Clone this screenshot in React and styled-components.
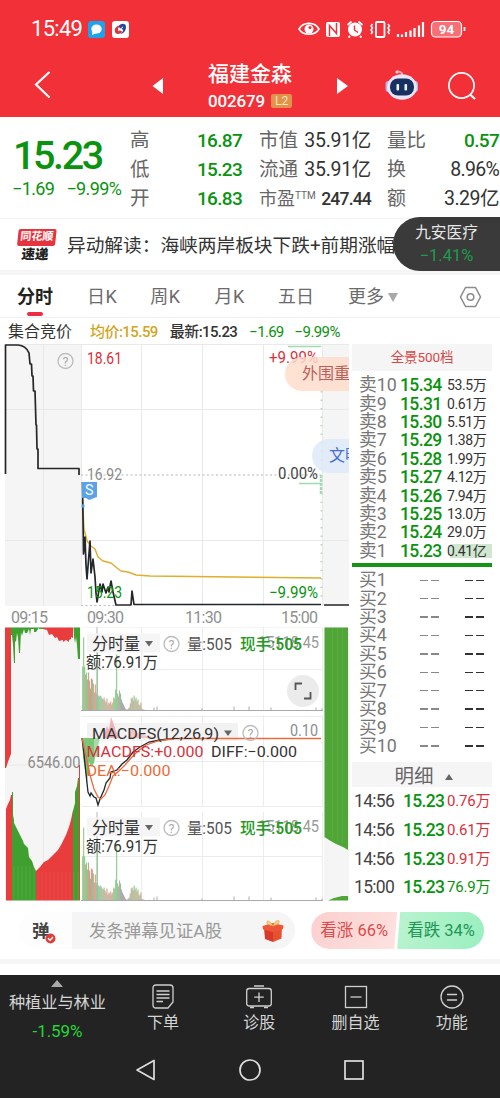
import React from "react";
import styled, { createGlobalStyle } from "styled-components";

const GlobalStyle = createGlobalStyle`
  * {
    box-sizing: border-box;
  }
  body {
    margin: 0;
    background: #fff;
    font-family: Roboto, "Noto Sans CJK SC", sans-serif;
    color: #333;
  }
  svg {
    display: block;
    flex-shrink: 0;
  }
`;

const RED = "#f23037";
const GREEN = "#0a930f";

const Screen = styled.div`
  width: 500px;
  height: 1098px;
  overflow: hidden;
  display: flex;
  flex-direction: column;
`;

const Text = styled.span`
  flex-shrink: 0;
  white-space: nowrap;
  font-size: ${(p) => p.$size || 16}px;
  line-height: ${(p) => p.$lh || 20}px;
  letter-spacing: ${(p) => p.$ls || 0}px;
  font-weight: ${(p) => p.$weight || 400};
  color: ${(p) => p.$color || "inherit"};
`;

/* ---------- header ---------- */

const Header = styled.header`
  height: 117px;
  flex-shrink: 0;
  background: ${RED};
  color: #fff;
`;

const StatusBar = styled.div`
  display: flex;
  align-items: center;
  height: 58px;
  padding: 0 31px 0 31px;
`;

const StatusIcons = styled.div`
  display: flex;
  align-items: center;
  margin-left: auto;
`;

const AppBadge = styled.div`
  width: 17px;
  height: 17px;
  margin-left: ${(p) => p.$gap}px;
  border-radius: 3px;
  background: ${(p) => p.$bg};
`;

const TitleBar = styled.div`
  display: flex;
  align-items: center;
  height: 55px;
  padding: 0 23px 0 34px;
`;

const Title = styled.div`
  display: flex;
  flex-direction: column;
  align-items: center;
  width: 174px;
`;

const CodeLine = styled.div`
  display: flex;
  align-items: center;
  gap: 6px;
  margin-top: 6px;
`;

const LevelTag = styled.span`
  width: 21px;
  height: 14px;
  border-radius: 2px;
  background: #e2924a;
  color: #ffe6bd;
  font-size: 12px;
  line-height: 15px;
  text-align: center;
`;

/* ---------- quote ---------- */

const Quote = styled.section`
  display: flex;
  height: 102px;
  flex-shrink: 0;
  padding-top: 9px;
  border-bottom: 1px solid #f3f3f3;
  color: ${GREEN};
`;

const LastPrice = styled.div`
  width: 130px;
  padding: 9px 0 0 13px;
`;

const Changes = styled.div`
  display: flex;
  gap: 12px;
  margin: 2px 0 0 -1px;
`;

const QuoteColumn = styled.div`
  width: ${(p) => p.$width}px;
  margin-right: ${(p) => p.$gap || 0}px;
`;

const QuoteRow = styled.div`
  display: flex;
  align-items: center;
  justify-content: space-between;
  height: 29px;
`;

const Sup = styled.sup`
  font-size: 10px;
  line-height: 0;
  vertical-align: 6px;
`;

/* ---------- news ---------- */

const News = styled.section`
  position: relative;
  display: flex;
  align-items: center;
  height: 51px;
  flex-shrink: 0;
  padding: 2px 0 0 17px;
`;

const NewsLogo = styled.div`
  width: 38px;
  margin-right: 12px;
  text-align: center;
  transform: skewX(-6deg);
`;

const NewsLogoTop = styled.div`
  height: 17px;
  border-radius: 2px;
  background: #e5343d;
  color: #fff;
  font-size: 11px;
  font-weight: 700;
  line-height: 16px;
`;

const NewsLogoBottom = styled.div`
  color: #222;
  font-size: 13.5px;
  font-weight: 900;
  line-height: 16px;
`;

const FloatStock = styled.div`
  position: absolute;
  right: 0;
  top: -2px;
  width: 107px;
  height: 54px;
  border-radius: 27px 0 0 27px;
  background: #3a3a3a;
  display: flex;
  flex-direction: column;
  align-items: center;
  padding-top: 5px;
  gap: 2px;
`;

const Divider = styled.div`
  height: ${(p) => p.$height}px;
  flex-shrink: 0;
  background: #f5f5f5;
`;

/* ---------- tabs ---------- */

const Tabs = styled.nav`
  display: flex;
  align-items: center;
  height: 43px;
  flex-shrink: 0;
  padding: 2px 16px 0 17px;
  border-bottom: 1px solid #f0f0f0;
`;

const Tab = styled.div`
  display: flex;
  flex-direction: column;
  align-items: center;
  justify-content: center;
  height: 43px;
  margin-right: ${(p) => p.$gap}px;
  color: ${(p) => (p.$active ? "#222" : "#6b6b6b")};
`;

const Underline = styled.i`
  width: 16px;
  height: 4px;
  border-radius: 2px;
  margin: 5px 0 -9px;
  background: #ee2b45;
`;

const InfoRow = styled.div`
  display: flex;
  align-items: center;
  height: 25px;
  flex-shrink: 0;
  padding: 2px 0 0 8px;
`;

/* ---------- charts ---------- */

const Main = styled.main`
  display: flex;
  height: 564px;
  flex-shrink: 0;
`;

const Charts = styled.div`
  width: 349px;
  margin-right: 3px;
  overflow: hidden;
`;

const PriceBox = styled.div`
  position: relative;
  height: 263px;
  overflow: hidden;
`;

const Bullet = styled.div`
  position: absolute;
  left: ${(p) => p.$x}px;
  top: ${(p) => p.$y}px;
  width: 120px;
  height: 34px;
  padding-left: ${(p) => p.$pad}px;
  border-radius: 17px;
  background: ${(p) => p.$bg};
  color: ${(p) => p.$fg};
  font-size: 16px;
  line-height: 34px;
  white-space: nowrap;
`;

const TimeAxis = styled.div`
  display: flex;
  height: 21px;
  color: #8f8f8f;
  padding-left: 11px;
`;

const TimeMark = styled(Text)`
  width: ${(p) => p.$width}px;
`;

const Lower = styled.div`
  display: flex;
  height: 280px;
`;

const Indicators = styled.div`
  width: 243px;
`;

const Indicator = styled.div`
  position: relative;
  height: ${(p) => p.$height}px;
`;

const Expand = styled.div`
  position: absolute;
  left: 206px;
  top: 48px;
  width: 32px;
  height: 32px;
  border-radius: 16px;
  background: #ebebeb;
`;

/* ---------- order book ---------- */

const Book = styled.aside`
  width: 140px;
  padding-top: 1px;
`;

const BookHeader = styled.div`
  height: 27px;
  background: #f5f5f5;
  color: #d84848;
  text-align: center;
  line-height: 26px;
`;

const Levels = styled.div`
  padding-top: ${(p) => p.$top}px;
`;

const Level = styled.div`
  display: flex;
  align-items: center;
  height: 18.42px;
  padding-left: 7px;
`;

const LevelName = styled(Text)`
  width: 41px;
  color: #777;
`;

const LevelPrice = styled(Text)`
  width: 46px;
  color: ${GREEN};
`;

const LevelVolume = styled(Text)`
  width: 46px;
  padding-left: 1px;
  background: ${(p) =>
    p.$mark ? "linear-gradient(90deg, #fff 4px, #cfe8cf 4px)" : "none"};
`;

const Dashes = styled.span`
  width: ${(p) => p.$width}px;
  height: 1.5px;
  margin-left: ${(p) => p.$left}px;
  background: linear-gradient(
    90deg,
    ${(p) => p.$color} 8px,
    transparent 8px,
    transparent 11px,
    ${(p) => p.$color} 11px
  );
`;

const Pressure = styled.div`
  height: 4px;
  margin-top: 3px;
  background: #159418;
`;

const DetailHeader = styled.div`
  display: flex;
  align-items: center;
  justify-content: center;
  gap: 11px;
  height: 25px;
  margin-top: 7px;
  padding: 4px 0 0 3px;
  background: #f5f5f5;
  color: #666;
`;

const Trade = styled.div`
  display: flex;
  align-items: center;
  height: 28.6px;
  padding-left: 2px;
`;

const TradeCell = styled(Text)`
  width: ${(p) => p.$width}px;
`;

/* ---------- comment bar ---------- */

const CommentBar = styled.div`
  display: flex;
  align-items: center;
  height: 52px;
  flex-shrink: 0;
  padding: 0 16px 5px 18px;
`;

const CommentInput = styled.div`
  display: flex;
  align-items: center;
  width: 278px;
  height: 37px;
  margin-right: 16px;
  border-radius: 19px;
  background: linear-gradient(90deg, #fdfdfd 54px, #f5f5f5 54px);
  color: #999;
`;

const Vote = styled.div`
  width: ${(p) => p.$width}px;
  height: 37px;
  padding-left: ${(p) => (p.$up ? 9 : 10)}px;
  border-radius: ${(p) => (p.$up ? "19px 0 0 19px" : "0 19px 19px 0")};
  clip-path: ${(p) =>
    p.$up
      ? "polygon(0 0, 100% 0, calc(100% - 3px) 100%, 0 100%)"
      : "polygon(3px 0, 100% 0, 100% 100%, 0 100%)"};
  background: ${(p) =>
    p.$up
      ? "linear-gradient(120deg, #fbcfcf, #fde2df)"
      : "linear-gradient(100deg, #b9f3cf, #9aefc0)"};
  color: ${(p) => (p.$up ? "#dc4a4a" : "#219653")};
  line-height: 38px;
`;

/* ---------- bottom ---------- */

const Bottom = styled.footer`
  flex: 1;
  margin-top: 11px;
  background: #232323;
  color: #d5d5d5;
`;

const Toolbar = styled.div`
  display: flex;
  height: 68px;
`;

const Industry = styled.div`
  display: flex;
  flex-direction: column;
  align-items: center;
  width: 115px;
  padding-top: 5px;
`;

const IndustryArrow = styled.svg`
  margin-bottom: 2px;
`;

const Tool = styled.div`
  display: flex;
  flex-direction: column;
  align-items: center;
  width: 96.4px;
  padding-top: 9px;
`;

const SystemNav = styled.div`
  display: flex;
  align-items: center;
  height: 54px;
  padding: 0 136px 0 135px;
  justify-content: space-between;
`;

/* ---------- data ---------- */

const quoteA = [
  ["高", "16.87"],
  ["低", "15.23"],
  ["开", "16.83"],
];

const sells = [
  ["卖10", "15.34", "53.5万"],
  ["卖9", "15.31", "0.61万"],
  ["卖8", "15.30", "5.51万"],
  ["卖7", "15.29", "1.38万"],
  ["卖6", "15.28", "1.99万"],
  ["卖5", "15.27", "4.12万"],
  ["卖4", "15.26", "7.94万"],
  ["卖3", "15.25", "13.0万"],
  ["卖2", "15.24", "29.0万"],
  ["卖1", "15.23", "0.41亿"],
];

const trades = [
  ["14:56", "0.76万", "#d9303a"],
  ["14:56", "0.61万", "#d9303a"],
  ["14:56", "0.91万", "#d9303a"],
  ["15:00", "76.9万", GREEN],
];

// minute volume bars: height and colour key
const volume =
  "44g 73g 44g 36r 38g 31g 38r 30r 22g 32r 31r 27g 18r 26r 17y 62g 15g 14g 15g 14y 12g 11r 13g 10r 8g 12r 6y 8r 7g 9r 6r 8g 13r 12g 21g 56g 17g 14y 20y 17g 11y 8y 6y 4y 2y 1y 1r 2y 3g 7r 12g 13r 10y 15g 11r 13g 9r 11g 6r 5g 8r 2y 1y 1y"
    .split(" ")
    .map((v) => [parseInt(v, 10), v.slice(-1)]);

const volumeColors = { g: "#84c884", r: "#dc9a8c", y: "#b1a8b4" };

/* ---------- small drawings ---------- */

// chart label stretched to a fixed run
const ChartText = ({ x, y, w, size = 16, fill = "#333", weight = 400, children }) => (
  <text
    x={x}
    y={y}
    fontSize={size}
    fontWeight={weight}
    fill={fill}
    textLength={w}
    lengthAdjust="spacingAndGlyphs"
  >
    {children}
  </text>
);

const Help = ({ x, y }) => (
  <g>
    <circle cx={x} cy={y} r="7.5" fill="none" stroke="#bcbcbc" strokeWidth="1.3" />
    <text x={x} y={y + 4.5} fontSize="12.5" fill="#aaa" textAnchor="middle">
      ?
    </text>
  </g>
);

const Grid = ({ height, rows }) => (
  <g stroke="#ececec" strokeWidth="1">
    {[60.5, 121.5, 182.5, 241.5].map((x) => (
      <line key={x} x1={x} x2={x} y1="0" y2={height} />
    ))}
    {rows.map((y) => (
      <line key={y} x1="1" x2="242" y1={y} y2={y} />
    ))}
  </g>
);

function StatusGlyphs() {
  return (
    <svg width="172" height="22" viewBox="0 0 172 22" fill="none" stroke="#fff">
      <path d="M2 11C6 3.500 18 3.500 22 11C18 18 6 18 2 11Z" strokeWidth="1.600" />
      <circle cx="12" cy="11" r="4.500" fill="#fff" stroke="none" />
      <circle cx="13" cy="9.500" r="1.500" fill={RED} stroke="none" />
      <rect x="29" y="4" width="14" height="15" rx="2" fill="#fff" stroke="none" />
      <path d="M32.500 18V7.500L39.500 15.500V5" stroke={RED} strokeWidth="1.500" />
      <circle cx="58" cy="11.500" r="7" fill="#fff" stroke="none" />
      <path d="M50.500 7l4-3.500M65.500 7l-4-3.500M53 18l-1.500 1.500M63 18l1.500 1.500" strokeWidth="1.800" />
      <path d="M57.500 7.500V12L61 14.500" stroke={RED} strokeWidth="1.400" />
      <rect x="79" y="4" width="8.500" height="15" rx="1" strokeWidth="1.800" />
      <path d="M75.500 6l-1.500 2 1.500 2-1.500 2 1.500 2-1.500 2M91 6l1.500 2-1.500 2 1.500 2-1.500 2 1.500 2" strokeWidth="1.500" />
      <path d="M101 19v-3M105 19v-2.500M109 19v-5M113.500 19v-6.500M117.500 19v-9M122 19V7.500M126 19V4" strokeWidth="2.200" />
      <rect x="134.500" y="3.500" width="30" height="15.500" rx="4" fill="#f77076" strokeWidth="1.200" />
      <path d="M167.500 9v4" strokeWidth="1.800" />
      <text x="149.500" y="16" fontSize="13.500" fontWeight="700" fill="#fff" stroke="none" textAnchor="middle">
        94
      </text>
    </svg>
  );
}

function Robot() {
  return (
    <svg width="34" height="34" viewBox="0 0 34 34">
      <path d="M17 8V4.500Q16 2.500 12 2.500" stroke="#ff9aa0" strokeWidth="2" fill="none" />
      <circle cx="12" cy="3" r="1.600" fill="#ffd3d8" />
      <rect x="0.500" y="12" width="6" height="11" rx="3" fill="#b9b0ea" />
      <rect x="27" y="12" width="6" height="11" rx="3" fill="#b9b0ea" />
      <ellipse cx="17" cy="18" rx="15" ry="12.800" fill="#e9e6fb" />
      <rect x="5" y="9.500" width="24" height="17" rx="8" fill="#18305f" />
      <rect x="11.500" y="15" width="2.600" height="6.500" rx="1" fill="#eaf6ff" />
      <rect x="19.500" y="15" width="2.600" height="6.500" rx="1" fill="#eaf6ff" />
    </svg>
  );
}

function PriceChart() {
  return (
    <svg width="349" height="263" viewBox="0 343 349 263">
      <rect x="5" y="344" width="76" height="262" fill="#f5f5f5" />
      <rect x="323" y="344" width="26" height="262" fill="#f5f5f5" />
      <g stroke="#e9e9e9">
        <path d="M5 344.500H349M5 409.500H349M5 540.500H349" />
        <path d="M43.500 344V606M81.500 344V606M141.500 344V606M202.500 344V606M263.500 344V606M322.500 344V606" />
      </g>
      <path d="M81 475H322" stroke="#b5b5b5" strokeDasharray="2 2.500" />
      <path d="M81 605.500H116" stroke="#bbb" strokeDasharray="2 2.500" />
      <path d="M288 346.500H321M299 483.500H321" stroke="#9fdbae" strokeWidth="1.500" />
      <path d="M321 475V495" stroke="#9fdbae" strokeWidth="2.500" strokeDasharray="3 1" />
      <path d="M321.500 391V600" stroke="#b9dcbf" strokeDasharray="1.500 7" strokeWidth="2" />
      <g fill="none" strokeLinejoin="round">
        <path
          d="M5.500 474V345H18C24 345.500 27 348 29 353L30 364H31.500L32 376H33L33.500 391H35L36 425H36.500L37 449H38V468.500H79V475"
          stroke="#262626"
          strokeWidth="1.700"
        />
        <path
          d="M82.500 500L84 529L87 541L91 546L95 549L98 557L103 561L111 563L117 568L121 571L128 572L136 575L150 576L321 578"
          stroke="#dfae2b"
          strokeWidth="1.500"
        />
        <path
          d="M82.500 482L83.500 554L85 537L86 565L87 579L90 541L91 573L93 559L95 577L96 593L97 602L100 584L102 592L103 584L106 593L108 587L109 592L111 581L113 592L116 605H131L132 591L134 604.500H321M324 605H349"
          stroke="#23262a"
          strokeWidth="1.700"
        />
      </g>
      <path d="M82 482H97V497L89 500L86 498H82Z" fill="#5ba3e8" />
      <circle cx="83" cy="506" r="1.800" fill="#5ba3e8" />
      <ChartText x={85} y={495} w={8.500} size={14} fill="#fff">S</ChartText>
      <Help x={65.500} y={361} />
      <ChartText x={87} y={364} w={35} fill="#d9303a">18.61</ChartText>
      <ChartText x={87} y={479.500} w={35} fill="#8c8c8c">16.92</ChartText>
      <ChartText x={87} y={598} w={35} fill={GREEN}>15.23</ChartText>
      <ChartText x={269} y={363} w={49} fill="#d9303a">+9.99%</ChartText>
      <ChartText x={278} y={479} w={40} fill="#444">0.00%</ChartText>
      <ChartText x={269} y={598} w={49} fill={GREEN}>−9.99%</ChartText>
    </svg>
  );
}

function AuctionChart() {
  const ridges = [];
  for (let x = 14; x < 80; x += 4) ridges.push(x);
  return (
    <svg width="81" height="280" viewBox="0 627 81 280">
      <rect x="5" y="627" width="75" height="273.500" fill="#f5f5f5" />
      <path d="M43.500 627V900M5 765H80" stroke="#e9e9e9" />
      <path d="M5 627.500H11V754L9 759L6 768H5Z" fill="#e93c3c" />
      <path
        d="M11 627.500H43V629H39V627.500L36 632H34V629H31L30 635L29 629L27 633H25L24 629L22 636L21 632L20 653H19L18 638L17 633L16 642L15 641V663H14L13 645L12 635H11Z"
        fill="#3fa02f"
      />
      <path d="M43 627.500H73V638L71 637V639L69 640V642L66 640L63 642V640L59 641L57 637L55 638L52 634L49 635L47 630L43 629Z" fill="#e93c3c" />
      <path d="M73.500 627.500H80V659H78L77 645L76 637L75 643L74 637Z" fill="#3fa02f" />
      <path d="M6 900.500V809L8 804L10 800L11 795H12V900.500Z" fill="#e93c3c" />
      <path d="M12 900.500V792H13V815L14 820V823L17 829L20 835L23 841L24 844L28 848L29 857L32 861L34 867L36 871V900.500Z" fill="#3fa02f" />
      <path d="M36 900.500V871L40 867L44 862L48 860L52 856L55 853L58 850L61 845L64 839L66 835L69 827L71 820L73 810V900.500Z" fill="#e93c3c" />
      <path d="M73 900.500V811L75 803V792L77 786L78 778H79V900.500Z" fill="#3fa02f" />
      <path d="M79.500 765V900.500" stroke="#e93c3c" />
      {ridges.map((x) => (
        <path key={x} d={`M${x} ${x < 36 ? 866 : 872}V900`} stroke="#fff" strokeOpacity=".09" />
      ))}
      <ChartText x={27.500} y={768} w={53} fill="#8c8c8c">6546.00</ChartText>
    </svg>
  );
}

const VolumeBars = ({ base }) => (
  <g>
    <path d={`M16 ${base}V0`} stroke="#b9b9bd" />
    {volume.map(([h, c], i) => (
      <rect
        key={i}
        x={1.2 + i * 0.97}
        y={base - h}
        width="1.05"
        height={h}
        fill={volumeColors[c]}
      />
    ))}
    <path d={`M0 ${base}H242`} stroke="#aaa" strokeWidth="1" />
    <path
      d={`M73 ${base}v-3M76 ${base}v-4M121 ${base}v-2M153 ${base}v-4M168 ${base}v-4M190 ${base}v-3M235 ${base}v-3M241 ${base}v-2`}
      stroke="#aaa"
    />
  </g>
);

function VolumePanel({ height, top, base, mid, children }) {
  return (
    <Indicator $height={height}>
      <svg width="243" height={height} viewBox={`0 0 243 ${height}`}>
        <Grid height={base} rows={[top - 9.5, mid]} />
        <VolumeBars base={base} />
        <rect x="6" y={top - 3} width="73" height="19" fill="#f4f4f4" fillOpacity=".9" />
        <ChartText x={11} y={top + 13} w={48} size={16.5}>分时量</ChartText>
        <path d={`M64 ${top + 4.5}h8l-4 5.500z`} fill="#666" />
        <Help x={90.500} y={top + 7.500} />
        <ChartText x={106} y={top + 13} w={45} size={16} fill="#555">量:505</ChartText>
        <ChartText x={177} y={top + 11} w={61} fill="#999">15118.45</ChartText>
        <ChartText x={159} y={top + 13} w={62} weight={500} fill="#239a23">现手:505</ChartText>
        <ChartText x={5} y={top + 31} w={72} size={16}>额:76.91万</ChartText>
      </svg>
      {children}
    </Indicator>
  );
}

function MacdPanel() {
  return (
    <Indicator $height={97}>
      <svg width="243" height="97" viewBox="81 715 243 97">
        <g transform="translate(81 715)">
          <Grid height={92} rows={[1.5, 46.5, 91.5]} />
        </g>
        <rect x="87" y="723" width="151" height="18" fill="#f2f2f2" />
        <path d="M103 738L107 726L109 730L111 717L113 722L116 731L120 738Z" fill="#f0b1b8" />
        <path d="M128 738L131 730L133 728L137 733L142 735L158 738Z" fill="#f5c5c8" />
        <path d="M82 738H99L98 748L96 752L94 763L91 767L89 762L87 783L85 770L83 757Z" fill="#7cc777" />
        <path d="M96 738V757" stroke="#a8dca6" strokeWidth="4" />
        <path
          d="M82 738L84 754L86 774L88 792L90 796L91 793L94 797L96 798L98 805L100 799L104 790L106 783L110 778L111 772L117 770L122 764L127 760L133 752L140 747L149 742L160 740L174 738.500"
          fill="none"
          stroke="#23262a"
          strokeWidth="1.300"
        />
        <path
          d="M82 738L86 756L90 775L94 789L98 797L101 799L105 795L109 786L113 776L119 771L125 765L131 758L138 751L146 745L158 741L175 738.500H321"
          fill="none"
          stroke="#e96b3d"
          strokeWidth="1.300"
        />
        <ChartText x={92} y={739} w={127} size={15.500}>MACDFS(12,26,9)</ChartText>
        <path d="M224 730.500h8l-4 5.500z" fill="#666" />
        <Help x={250.500} y={733} />
        <ChartText x={290} y={736} w={28} fill="#8c8c8c">0.10</ChartText>
        <ChartText x={86.500} y={757} w={117} size={15.500} fill="#d9303a">MACDFS:+0.000</ChartText>
        <ChartText x={211} y={757} w={86} size={15.500}>DIFF:−0.000</ChartText>
        <ChartText x={86.500} y={775.500} w={84} size={15.500} fill="#ee6a33">DEA:−0.000</ChartText>
      </svg>
    </Indicator>
  );
}

function AfterHoursChart() {
  return (
    <svg width="25" height="280" viewBox="324 627 25 280">
      <rect x="324" y="627" width="25" height="273.500" fill="#f5f5f5" />
      <path d="M324.500 627.500H348V850L343 847L336 844L329 840L324.500 837Z" fill="#4fa536" />
      <path d="M328 900.500L334 898L342 896H348V900.500Z" fill="#4fa536" />
      <path d="M332.500 627.500V838M337.500 627.500V840M342.500 627.500V843" stroke="#fff" strokeOpacity=".08" />
    </svg>
  );
}

function Gift() {
  return (
    <svg width="24" height="24" viewBox="0 0 24 24">
      <path d="M3 9L12 12V23L4 20Z" fill="#d9392a" />
      <path d="M21 8.500L12 12V23L20.500 19.500Z" fill="#e8512f" />
      <path d="M1.500 7L12 4L22.500 6.500L22 10L12 13L2 10.500Z" fill="#ee5638" />
      <path d="M12 7C9 1 5 1 6 4C7 6 10 6 12 7C14 1 19 0 18 3.500C17 6 14 6 12 7Z" fill="#f7d084" stroke="#e7a34a" strokeWidth=".7" />
    </svg>
  );
}

const Danmu = styled.div`
  position: relative;
  width: 54px;
  padding-left: 14px;
`;

const Check = styled.svg`
  position: absolute;
  left: 27px;
  top: 12px;
`;

const toolIcons = {
  order: (
    <>
      <path d="M5 1H19Q22 1 22 4V18L17 24H5Q2 24 2 21V4Q2 1 5 1Z" />
      <path d="M5.500 7H18.500M5.500 10.500H18.500M5.500 14H18.500M5.500 17.500H12" />
    </>
  ),
  doctor: (
    <>
      <rect x="-0.300" y="4.500" width="24.600" height="17.500" rx="2.500" />
      <path d="M7 2H17M12 8.500V18M7.200 13.200H16.800M3 23.500H7M17 23.500H21" />
    </>
  ),
  remove: (
    <>
      <rect x="1.500" y="2.500" width="21" height="21" />
      <path d="M6.500 13H17.500" />
    </>
  ),
  more: (
    <>
      <circle cx="12" cy="13" r="11" />
      <path d="M7 10.500H17M7 16H17" />
    </>
  ),
};

const tools = [
  ["order", "下单"],
  ["doctor", "诊股"],
  ["remove", "删自选"],
  ["more", "功能"],
];

/* ---------- page ---------- */

function App() {
  return (
    <Screen>
      <GlobalStyle />
      <Header>
        <StatusBar>
          <Text $size={22} $ls={-0.7}>15:49</Text>
          <AppBadge $gap={6} $bg="#1ba3ee">
            <svg width="17" height="17" viewBox="0 0 17 17">
              <ellipse cx="8.500" cy="8" rx="5.200" ry="4.500" fill="#fff" />
              <path d="M4.500 10L4 14L9 12Z" fill="#fff" />
            </svg>
          </AppBadge>
          <AppBadge $gap={7} $bg="#fff">
            <svg width="17" height="17" viewBox="0 0 17 17">
              <path d="M10 4C4 4 2 8 3 11C4 14 9 13 10 11C10 9 6 10 6 8C6 6 8 5 10 4Z" fill="#d8343c" />
              <path d="M7 5C9 2 14 2 14 6C14 10 11 13 8 13C11 11 12 9 10 8C8 8 7 7 7 5Z" fill="#27479c" />
              <path d="M6 10L11 6" stroke="#fff" />
            </svg>
          </AppBadge>
          <StatusIcons>
            <StatusGlyphs />
          </StatusIcons>
        </StatusBar>
        <TitleBar>
          <svg width="17" height="29" viewBox="0 0 17 29">
            <path d="M15.500 1L2 13.500L15.500 26.500" stroke="#fff" strokeWidth="2.200" fill="none" />
          </svg>
          <svg width="112" height="16" viewBox="0 0 112 16">
            <path d="M112 0V16L101.500 8Z" fill="#fff" />
          </svg>
          <Title>
            <Text $size={21} $lh={24} $weight={500}>福建金森</Text>
            <CodeLine>
              <Text $size={17} $ls={-0.15} $lh={18} $weight={500}>002679</Text>
              <LevelTag>L2</LevelTag>
            </CodeLine>
          </Title>
          <svg width="48" height="16" viewBox="0 0 48 16">
            <path d="M0 0V16L11 8Z" fill="#fff" />
          </svg>
          <Robot />
          <svg width="58" height="30" viewBox="0 0 58 30">
            <circle cx="42.500" cy="14.500" r="12.600" stroke="#fff" strokeWidth="1.700" fill="none" />
            <path d="M51 23.500L56 28" stroke="#fff" strokeWidth="2.200" />
          </svg>
        </TitleBar>
      </Header>

      <Quote>
        <LastPrice>
          <Text as="div" $size={39.5} $lh={42} $ls={-2.4} $weight={500}>15.23</Text>
          <Changes>
            <Text $size={18} $ls={-0.6}>−1.69</Text>
            <Text $size={18} $ls={-0.6}>−9.99%</Text>
          </Changes>
        </LastPrice>
        <QuoteColumn $width={112} $gap={17}>
          {quoteA.map(([name, value]) => (
            <QuoteRow key={name}>
              <Text $size={19.5} $color="#666">{name}</Text>
              <Text $size={19} $ls={-0.7} $weight={500}>{value}</Text>
            </QuoteRow>
          ))}
        </QuoteColumn>
        <QuoteColumn $width={112} $gap={16}>
          <QuoteRow>
            <Text $size={19.5} $color="#666">市值</Text>
            <Text $size={19.5} $ls={-0.3} $color="#333">35.91亿</Text>
          </QuoteRow>
          <QuoteRow>
            <Text $size={19.5} $color="#666">流通</Text>
            <Text $size={19.5} $ls={-0.3} $color="#333">35.91亿</Text>
          </QuoteRow>
          <QuoteRow>
            <Text $size={18} $color="#666">
              市盈<Sup>TTM</Sup>
            </Text>
            <Text $size={17.5} $ls={-0.8} $color="#333" $weight={500}>247.44</Text>
          </QuoteRow>
        </QuoteColumn>
        <QuoteColumn $width={112}>
          <QuoteRow>
            <Text $size={19.5} $color="#666">量比</Text>
            <Text $size={19} $ls={-0.7} $weight={500}>0.57</Text>
          </QuoteRow>
          <QuoteRow>
            <Text $size={19} $color="#666">换</Text>
            <Text $size={19.5} $ls={-0.7} $color="#333">8.96%</Text>
          </QuoteRow>
          <QuoteRow>
            <Text $size={19} $color="#666">额</Text>
            <Text $size={19.5} $ls={-0.5} $color="#333">3.29亿</Text>
          </QuoteRow>
        </QuoteColumn>
      </Quote>

      <News>
        <NewsLogo>
          <NewsLogoTop>同花顺</NewsLogoTop>
          <NewsLogoBottom>速递</NewsLogoBottom>
        </NewsLogo>
        <Text $size={18.7} $color="#333">异动解读：海峡两岸板块下跌+前期涨幅</Text>
        <FloatStock>
          <Text $size={15.7} $lh={22} $color="#e6e6e6">九安医疗</Text>
          <Text $size={16.5} $color="#1d9d4c">−1.41%</Text>
        </FloatStock>
      </News>
      <Divider $height={5} />

      <Tabs>
        <Tab $active $gap={34}>
          <Text $size={18} $weight={700}>分时</Text>
          <Underline />
        </Tab>
        <Tab $gap={33}><Text $size={18} $ls={0.5}>日K</Text></Tab>
        <Tab $gap={34}><Text $size={18} $ls={0.5}>周K</Text></Tab>
        <Tab $gap={33}><Text $size={18} $ls={0.5}>月K</Text></Tab>
        <Tab $gap={34}><Text $size={18}>五日</Text></Tab>
        <Tab $gap={4}><Text $size={18}>更多</Text></Tab>
        <svg width="10" height="9" viewBox="0 0 10 9">
          <path d="M0 0H10L5 9Z" fill="#a8a8a8" />
        </svg>
        <svg width="84" height="22" viewBox="0 0 84 22" fill="none" stroke="#8c8c8c" strokeWidth="1.600">
          <path d="M67.500 1.500H77.500L82.500 11L77.500 20.500H67.500L62.500 11Z" strokeLinejoin="round" />
          <circle cx="72.500" cy="11" r="3.300" />
        </svg>
      </Tabs>
      <InfoRow>
        <Text $size={16}>集合竞价</Text>
        <svg width="18" height="1" />
        <Text $size={15} $ls={-0.55} $color="#d3a51c" $weight={500}>均价:15.59</Text>
        <svg width="12" height="1" />
        <Text $size={15} $ls={-0.6} $weight={500}>最新:15.23</Text>
        <svg width="12" height="1" />
        <Text $size={15} $ls={-0.7} $color={GREEN}>−1.69</Text>
        <svg width="11" height="1" />
        <Text $size={15} $ls={-0.6} $color={GREEN}>−9.99%</Text>
      </InfoRow>

      <Main>
        <Charts>
          <PriceBox>
            <PriceChart />
            <Bullet $x={285} $y={14} $pad={17} $bg="rgba(255,220,202,.82)" $fg="#bd5f59">外围重要</Bullet>
            <Bullet $x={312} $y={96} $pad={17} $bg="rgba(222,234,248,.85)" $fg="#466fd0">文明</Bullet>
          </PriceBox>
          <TimeAxis>
            <TimeMark $width={76} $size={16} $ls={-0.7} $lh={23}>09:15</TimeMark>
            <TimeMark $width={98} $size={16} $ls={-0.7} $lh={23}>09:30</TimeMark>
            <TimeMark $width={96} $size={16} $ls={-0.7} $lh={23}>11:30</TimeMark>
            <TimeMark $width={50} $size={16} $ls={-0.7} $lh={23}>15:00</TimeMark>
          </TimeAxis>
          <Lower>
            <AuctionChart />
            <Indicators>
              <VolumePanel height={88} top={9.5} base={83.5} mid={42.5}>
                <Expand>
                  <svg width="32" height="32" viewBox="0 0 32 32" fill="none" stroke="#555" strokeWidth="1.800">
                    <path d="M8.500 15V8.500H15M23.500 17V23.500H17" />
                  </svg>
                </Expand>
              </VolumePanel>
              <MacdPanel />
              <VolumePanel height={95} top={8.5} base={88.5} mid={44.5} />
            </Indicators>
            <AfterHoursChart />
          </Lower>
        </Charts>

        <Book>
          <BookHeader>
            <Text $size={13.5} $ls={-0.1}>全景500档</Text>
          </BookHeader>
          <Levels $top={5}>
            {sells.map(([name, price, vol], i) => (
              <Level key={name}>
                <LevelName $size={17.8} $lh={18}>{name}</LevelName>
                <LevelPrice $size={17.5} $ls={-0.6} $lh={18} $weight={500}>{price}</LevelPrice>
                <LevelVolume $size={14} $ls={-0.4} $lh={14} $mark={i === 9}>{vol}</LevelVolume>
              </Level>
            ))}
          </Levels>
          <Pressure />
          <Levels $top={4}>
            {[1, 2, 3, 4, 5, 6, 7, 8, 9, 10].map((n) => (
              <Level key={n}>
                <LevelName $size={17.8} $lh={18}>买{n}</LevelName>
                <Dashes $left={20} $width={19} $color="#888" />
                <Dashes $left={26} $width={19} $color="#333" />
              </Level>
            ))}
          </Levels>
          <DetailHeader>
            <Text $size={19.5}>明细</Text>
            <svg width="8" height="6" viewBox="0 0 8 6">
              <path d="M4 0L8 6H0Z" fill="#666" />
            </svg>
          </DetailHeader>
          {trades.map(([time, vol, color], i) => (
            <Trade key={i}>
              <TradeCell $width={49} $size={17.5} $ls={-0.7} $color="#444">{time}</TradeCell>
              <TradeCell $width={44} $size={17.5} $ls={-0.7} $weight={500} $color={GREEN}>15.23</TradeCell>
              <TradeCell $width={45} $size={15} $ls={-0.2} $color={color}>{vol}</TradeCell>
            </Trade>
          ))}
        </Book>
      </Main>

      <CommentBar>
        <CommentInput>
          <Danmu>
            <Text $size={17.5} $weight={700} $color="#444">弹</Text>
            <Check width="11" height="11" viewBox="0 0 11 11">
              <circle cx="5.500" cy="5.500" r="5" fill="#dd3f3a" />
              <path d="M3 5.200L5 7.200L8 4" stroke="#fff" strokeWidth="1.300" fill="none" />
            </Check>
          </Danmu>
          <svg width="17" height="1" />
          <Text $size={17.4}>发条弹幕见证A股</Text>
          <svg width="39" height="1" />
          <Gift />
        </CommentInput>
        <Vote $up $width={86}>
          <Text $size={16.5}>看涨 66%</Text>
        </Vote>
        <Vote $width={87}>
          <Text $size={16.5}>看跌 34%</Text>
        </Vote>
      </CommentBar>
      <Divider $height={5} />

      <Bottom>
        <Toolbar>
          <Industry>
            <IndustryArrow width="12" height="7" viewBox="0 0 12 7">
              <path d="M6 0L12 7H0Z" fill="#aaa" />
            </IndustryArrow>
            <Text $size={16.2} $lh={28}>种植业与林业</Text>
            <Text $size={17} $ls={-0.1} $lh={28} $color="#22d837">-1.59%</Text>
          </Industry>
          {tools.map(([icon, label]) => (
            <Tool key={icon}>
              <svg width="26" height="26" viewBox="-1 0 26 26" fill="none" stroke="#d0d0d0" strokeWidth="1.300">
                {toolIcons[icon]}
              </svg>
              <Text $size={16} $lh={26}>{label}</Text>
            </Tool>
          ))}
        </Toolbar>
        <SystemNav>
          <svg width="21" height="22" viewBox="0 0 21 22">
            <path d="M19 1.500V20.500L2 11Z" stroke="#ddd" strokeWidth="1.700" strokeLinejoin="round" fill="none" />
          </svg>
          <svg width="22" height="22" viewBox="0 0 22 22">
            <circle cx="11" cy="11" r="10" stroke="#ddd" strokeWidth="1.700" fill="none" />
          </svg>
          <svg width="20" height="20" viewBox="0 0 20 20">
            <rect x="1" y="1" width="18" height="18" stroke="#ddd" strokeWidth="1.700" fill="none" />
          </svg>
        </SystemNav>
      </Bottom>
    </Screen>
  );
}

export default App;
